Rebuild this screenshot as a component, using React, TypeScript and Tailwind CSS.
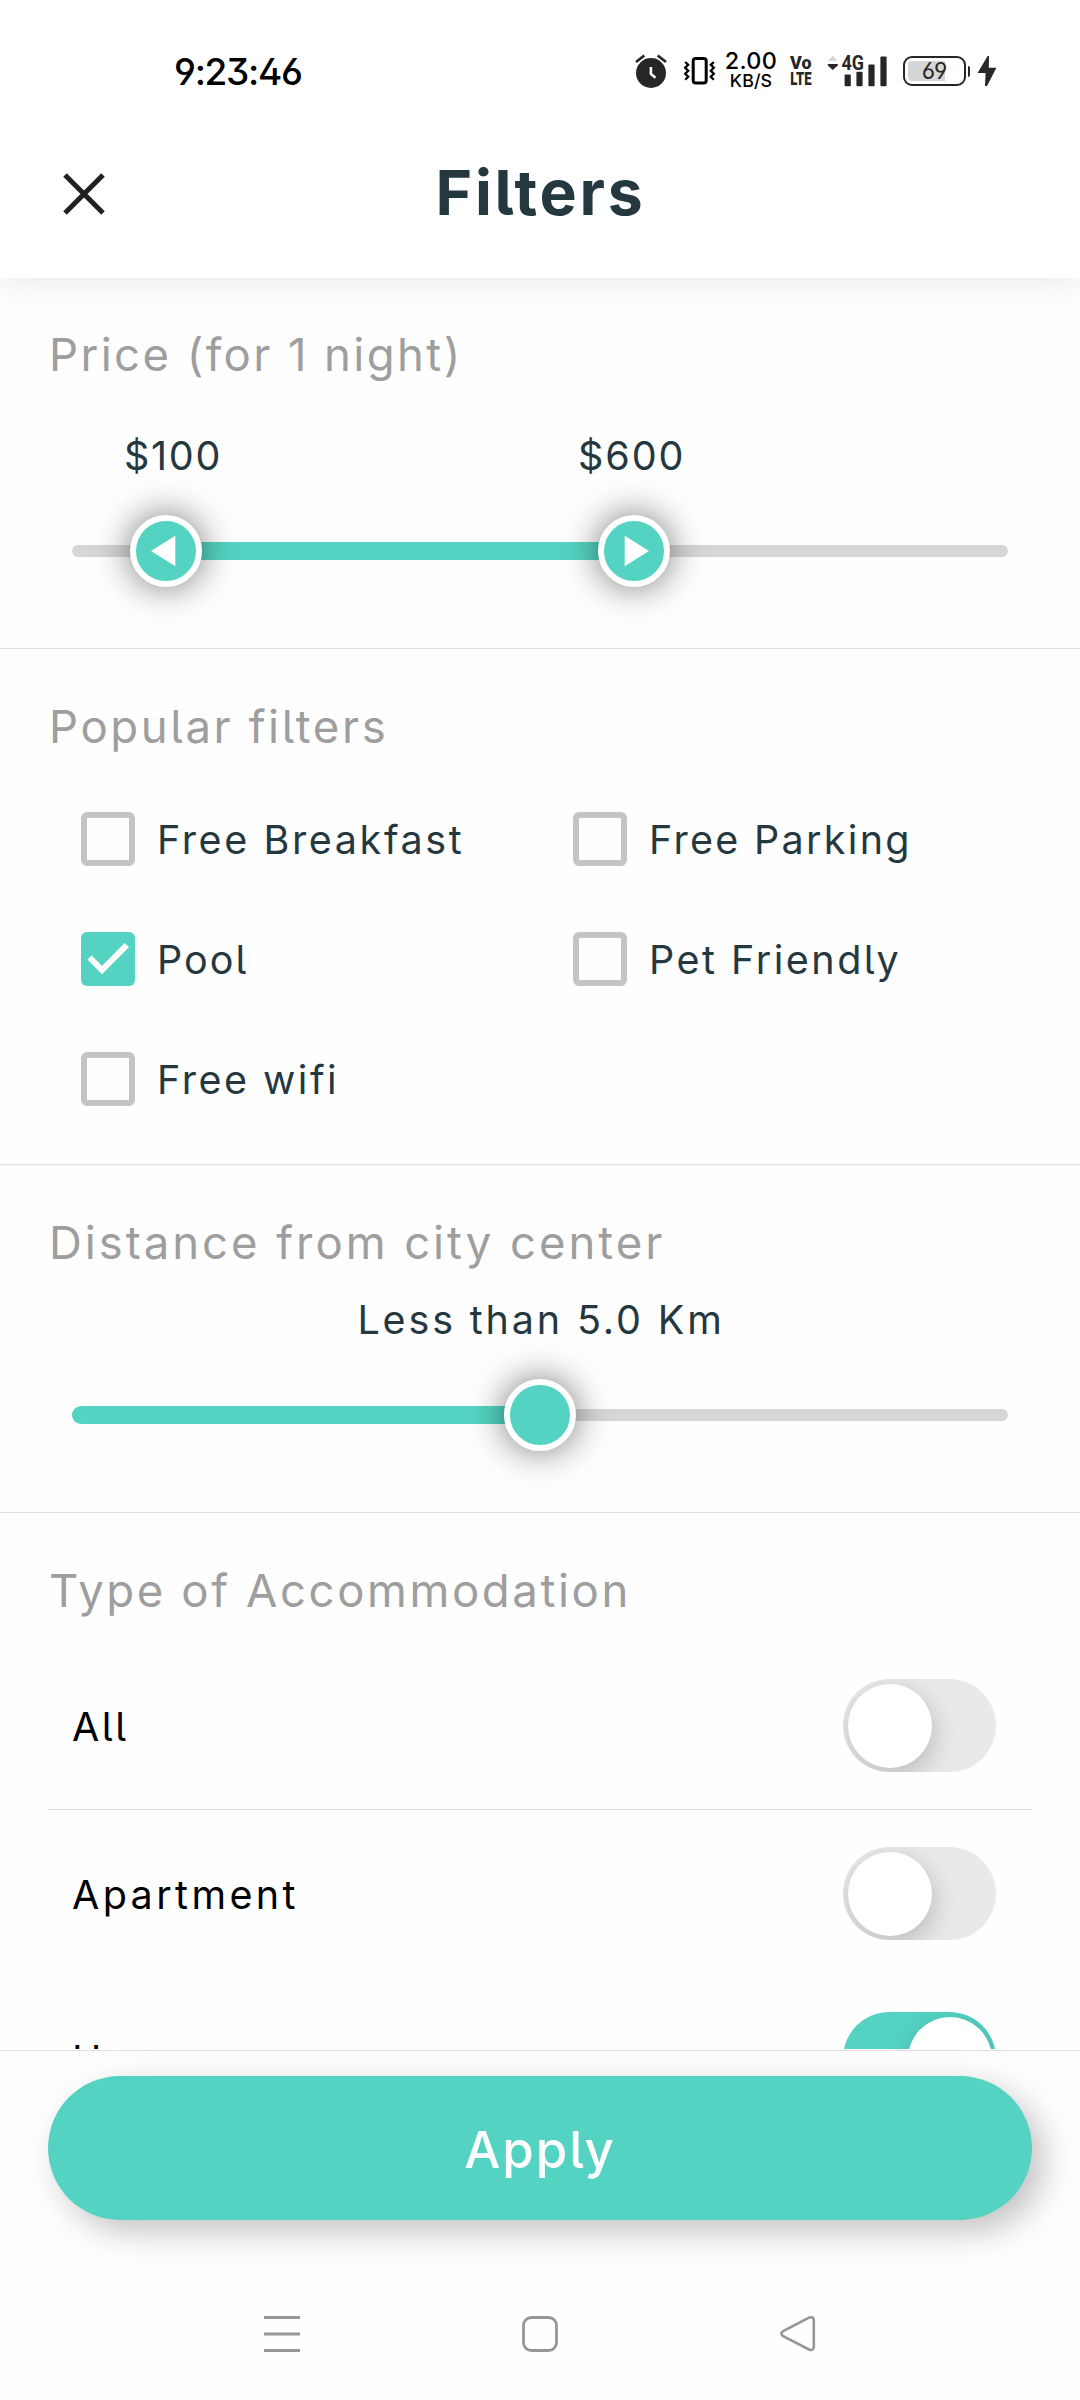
import React, { useState } from "react";

const SANS = "font-['Inter',sans-serif] [font-feature-settings:'cv05']";

function AlarmIcon() {
  return (
    <svg width="32" height="34" viewBox="0 0 32 34" fill="none">
      <circle cx="16" cy="19" r="15" fill="#262626" />
      <path d="M1 8 9.3 1.5M22.7 1.5 31 8" stroke="#262626" strokeWidth="2.8" />
      <path d="M15.9 13v7l4.6 3.8" stroke="#fff" strokeWidth="2.6" />
    </svg>
  );
}

function VibrateIcon() {
  return (
    <svg width="33" height="30" viewBox="0 0 33 30" fill="none" stroke="#000">
      <rect x="10.2" y="2.5" width="13" height="24.6" rx="2.5" strokeWidth="3" />
      <path d="m2.2 6 3 2.8-3 3 3 3-3 3 3 3-3 3M30.8 6l-3 2.8 3 3-3 3 3 3-3 3 3 3" strokeWidth="2.3" />
    </svg>
  );
}

function VolteIcon() {
  return (
    <svg
      width="24"
      height="32"
      viewBox="0 0 24 32"
      className="overflow-visible font-['Roboto',sans-serif] font-black"
      fill="#262626"
    >
      <text x="1" y="14.2" fontSize="19" textLength="21.5" lengthAdjust="spacingAndGlyphs">Vo</text>
      <text x="1.2" y="30.4" fontSize="19" textLength="21.5" lengthAdjust="spacingAndGlyphs">LTE</text>
    </svg>
  );
}

function SignalIcon() {
  return (
    <svg width="60" height="34" viewBox="0 0 60 34" fill="#262626" className="overflow-visible">
      <path d="M5.7 1.5 10.5 7H1Z" fill="#d6d6d6" />
      <path d="M.8 10h10v1.4L5.7 16 .8 11.4Z" />
      <rect x="17.6" y="20.5" width="6.2" height="11.8" rx="1" />
      <rect x="29.4" y="17.8" width="6.2" height="14.5" rx="1" />
      <rect x="41.4" y="10.5" width="6.2" height="21.8" rx="1" />
      <rect x="53.4" y="2.4" width="6.2" height="29.9" rx="1" />
      <text x="14.4" y="15.8" fontSize="19.5" textLength="22.5" lengthAdjust="spacingAndGlyphs" className="font-['Roboto',sans-serif] font-bold">
        4G
      </text>
    </svg>
  );
}

function Battery() {
  return (
    <div className="flex items-center">
      <div className="relative h-[30px] w-[63px] rounded-[9px] border-2 border-[#262626] p-[3px]">
        <div className="h-full w-[37px] rounded-l-[4px] bg-[#d6d6d6]" />
        <span className="absolute inset-0 flex items-center justify-center text-[23px] leading-none tracking-[-0.3px] text-[#262626] [font-feature-settings:'ss01']">
          69
        </span>
      </div>
      <div className="ml-[1.5px] h-[11px] w-[2px] rounded-r-sm bg-[#262626]" />
    </div>
  );
}

function BoltIcon() {
  return (
    <svg width="20" height="32" viewBox="0 0 20 32" fill="#262626">
      <path d="M10.6 1 .6 18h8l-.6 13h2l9.4-18.2h-7.6L12 1Z" />
    </svg>
  );
}

function StatusBar() {
  return (
    <div className="flex h-[142px] items-center pl-[174px]">
      <span className="w-[461px] text-[37px] leading-none font-medium tracking-[-1.3px] text-black [font-feature-settings:'ss01']">
        9:23:46
      </span>
      <AlarmIcon />
      <div className="ml-4"><VibrateIcon /></div>
      <div className="ml-[9px] flex w-[52px] flex-col items-center font-medium text-black">
        <span className="h-5 text-[23.4px] leading-[18px] tracking-[0.3px]">2.00</span>
        <span className="h-[18px] text-[17.8px] leading-[18px] tracking-[0.1px]">KB/S</span>
      </div>
      <div className="ml-3"><VolteIcon /></div>
      <div className="ml-[14px]"><SignalIcon /></div>
      <div className="ml-4"><Battery /></div>
      <div className="ml-[7px]"><BoltIcon /></div>
    </div>
  );
}

function Header() {
  return (
    <header className="relative z-10 h-[278px] bg-white shadow-[0_6px_29px_rgba(158,158,158,0.2)]">
      <StatusBar />
      <div className="grid h-[104px] grid-cols-[1fr_auto_1fr] items-center">
        <button aria-label="Close" className="ml-[63px] w-[42px]">
          <svg width="42" height="42" viewBox="0 0 42 42" stroke="#212121" strokeWidth="5">
            <path d="m2 2 38 38M40 2 2 40" />
          </svg>
        </button>
        <h1 className="pb-[3px] pl-px text-[62.5px] leading-none font-bold tracking-[2.7px] text-[#253840]">Filters</h1>
      </div>
    </header>
  );
}

function Heading({ children, className }: { children: React.ReactNode; className: string }) {
  return <h2 className={`h-12 pl-[49px] text-[45.5px] leading-[47px] whitespace-nowrap text-[#9e9e9e] ${className}`}>{children}</h2>;
}

function Thumb({ at, arrow }: { at: number; arrow?: "left" | "right" }) {
  return (
    <div
      className="absolute top-0 flex size-[72px] -translate-x-1/2 items-center justify-center rounded-full border-6 border-white bg-[#54d3c2] shadow-[0_0_36px_rgba(0,0,0,0.55)]"
      style={{ left: `${at}%` }}
    >
      {arrow && (
        <svg width="40" height="40" viewBox="-20 -20 40 40" fill="#fff">
          <path d={arrow === "left" ? "M-15 0 9.3-15.3v30.6Z" : "M15 0-9.3-15.3v30.6Z"} />
        </svg>
      )}
    </div>
  );
}

function Slider({ from, to, range }: { from: number; to: number; range?: boolean }) {
  return (
    <div className="relative mx-[72px] mt-[39px] flex h-[72px] items-center">
      <div className="h-3 w-full rounded-full bg-[#d6d6d6]" />
      <div
        className={`absolute top-[27px] h-[18px] bg-[#54d3c2] ${range ? "" : "rounded-l-full"}`}
        style={{ left: `${from}%`, width: `${to - from}%` }}
      />
      {range && <Thumb at={from} arrow="left" />}
      <Thumb at={to} arrow={range ? "right" : undefined} />
    </div>
  );
}

function Check({ label, className, initial = false }: { label: string; className: string; initial?: boolean }) {
  const [on, setOn] = useState(initial);
  return (
    <button onClick={() => setOn(!on)} className="flex h-[54px] items-center text-left">
      {on ? (
        <span className="flex size-[54px] items-center justify-center rounded-[6px] bg-[#54d3c2]">
          <svg width="54" height="54" viewBox="0 0 54 54" fill="none" stroke="#fff" strokeWidth="6">
            <path d="m8.5 25.5 12.5 12.5L45.8 13.2" />
          </svg>
        </span>
      ) : (
        <span className="size-[54px] rounded-[6px] border-6 border-[#c4c4c4]" />
      )}
      <span className={`ml-[22px] pt-0.5 text-[39.5px] leading-10 whitespace-nowrap text-[#253840] ${className}`}>{label}</span>
    </button>
  );
}

function Switch({ initial = false }: { initial?: boolean }) {
  const [on, setOn] = useState(initial);
  return (
    <button
      onClick={() => setOn(!on)}
      className={`flex h-[93px] w-[153px] items-center overflow-hidden rounded-full px-[4.5px] ${on ? "justify-end bg-[#54d3c2]" : "bg-[#e9e9e9]"}`}
    >
      <span className="size-[84px] rounded-full bg-white shadow-[2px_8px_26px_rgba(0,0,0,0.2)]" />
    </button>
  );
}

function TypeRow({ label, className, on }: { label: string; className: string; on?: boolean }) {
  return (
    <div className="flex items-center justify-between pr-[36px] pl-[24px]">
      <span className={`pt-[3px] text-[39.5px] leading-10 text-black ${className}`}>{label}</span>
      <Switch initial={on} />
    </div>
  );
}

export default function App() {
  return (
    <div className={`flex h-[2400px] w-[1080px] flex-col overflow-hidden bg-[#fefefe] ${SANS}`}>
      <Header />
      <main className="h-[1771px] shrink-0 overflow-hidden">
        <section className="border-b border-[#e0e0e0] pt-[53px] pb-[61px]">
          <Heading className="tracking-[2.4px]">Price (for 1 night)</Heading>
          <div className="mt-[57px] flex h-10 pl-[124px] text-[39.5px] leading-10 text-[#253840]">
            <span className="w-[454px] tracking-[1.7px]">$100</span>
            <span className="tracking-[1.9px]">$600</span>
          </div>
          <Slider from={10} to={60} range />
        </section>

        <section className="border-b border-[#e0e0e0] pt-[54px] pb-[58px]">
          <Heading className="tracking-[2.6px]">Popular filters</Heading>
          <div className="mt-[61px] grid grid-cols-[492px_1fr] gap-y-[66px] pl-[81px]">
            <Check label="Free Breakfast" className="tracking-[2.6px]" />
            <Check label="Free Parking" className="tracking-[2.3px]" />
            <Check label="Pool" initial className="tracking-[2px]" />
            <Check label="Pet Friendly" className="tracking-[2.5px]" />
            <Check label="Free wifi" className="tracking-[2.5px]" />
          </div>
        </section>

        <section className="border-b border-[#e0e0e0] pt-[54px] pb-[61px]">
          <Heading className="tracking-[2.95px]">Distance from city center</Heading>
          <div className="mt-[33px] h-10 pl-0.5 text-center text-[39.5px] leading-10 tracking-[2.85px] text-[#253840]">
            Less than 5.0 Km
          </div>
          <Slider from={0} to={50} />
        </section>

        <section className="pt-[54px]">
          <Heading className="tracking-[2.6px]">Type of Accommodation</Heading>
          <div className="mx-12 mt-16">
            <div className="border-b border-[#e0e0e0] pb-[37px]">
              <TypeRow label="All" className="tracking-[2.5px]" />
            </div>
            <div className="pt-[37px]">
              <TypeRow label="Apartment" className="tracking-[3.4px]" />
            </div>
            <div className="pt-[72px]">
              <TypeRow label="Home" className="tracking-[3px]" on />
            </div>
          </div>
        </section>
      </main>

      <footer className="mt-px border-t border-[#e0e0e0] px-12 pt-[25px]">
        <button className="flex h-36 w-full items-center justify-center rounded-[72px] bg-[#54d3c2] pt-[3px] text-[51px] leading-none font-medium tracking-[1.9px] text-white shadow-[12px_12px_32px_rgba(158,158,158,0.6)]">
          Apply
        </button>
      </footer>

      <nav className="mt-12 flex h-[132px] items-center justify-between px-[264px]">
        <svg width="36" height="38" viewBox="0 0 36 38" stroke="#969696" strokeWidth="3">
          <path d="M0 2.5h36M0 19h36M0 35.5h36" />
        </svg>
        <svg width="36" height="38" viewBox="0 0 36 38" fill="none" stroke="#969696" strokeWidth="2.8">
          <rect x="1.5" y="2.5" width="33" height="33" rx="8" />
        </svg>
        <svg width="36" height="38" viewBox="0 0 36 38" fill="none" stroke="#969696" strokeWidth="2.6">
          <path d="M29 2.7 3.2 16q-3.6 2.6 0 5.2L29 34.5q4.6 1.6 4.8-2.5V5.2Q33.6 1.1 29 2.7Z" />
        </svg>
      </nav>
    </div>
  );
}
